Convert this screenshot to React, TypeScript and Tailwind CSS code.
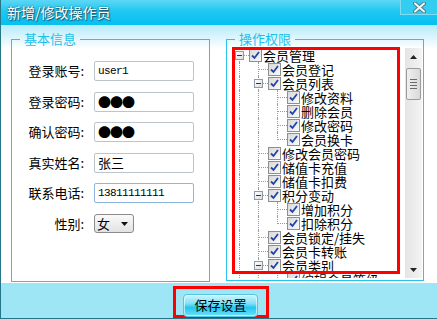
import { type ReactNode } from 'react'

const cjk = "font-['Noto_Sans_CJK_SC',sans-serif]"

interface Row {
  t: string
  l: number
  anc: boolean[]
  box?: boolean
  last?: boolean
  first?: boolean
}

const rows: Row[] = [
  { t: '会员管理', l: 0, anc: [], box: true, first: true },
  { t: '会员登记', l: 1, anc: [true] },
  { t: '会员列表', l: 1, anc: [true], box: true },
  { t: '修改资料', l: 2, anc: [true, true] },
  { t: '删除会员', l: 2, anc: [true, true] },
  { t: '修改密码', l: 2, anc: [true, true] },
  { t: '会员换卡', l: 2, anc: [true, true], last: true },
  { t: '修改会员密码', l: 1, anc: [true] },
  { t: '储值卡充值', l: 1, anc: [true] },
  { t: '储值卡扣费', l: 1, anc: [true] },
  { t: '积分变动', l: 1, anc: [true], box: true },
  { t: '增加积分', l: 2, anc: [true, true] },
  { t: '扣除积分', l: 2, anc: [true, true], last: true },
  { t: '会员锁定/挂失', l: 1, anc: [true] },
  { t: '会员卡转账', l: 1, anc: [true] },
  { t: '会员类别', l: 1, anc: [true], box: true },
  { t: '编辑会员等级', l: 2, anc: [true, true] },
]

function Check() {
  return (
    <div className="w-[13px] h-[13px] shrink-0 border border-[#8e8f8f] bg-[linear-gradient(135deg,#d8d8d8,#fbfbfb)] flex items-center justify-center">
      <svg width="11" height="11" viewBox="0 0 11 11">
        <path d="M2 5.5 L4.5 8 L9 2" fill="none" stroke="#2344a6" strokeWidth="1.8" />
      </svg>
    </div>
  )
}

function TreeRow({ r }: { r: Row }) {
  const own = r.first
    ? 'absolute left-[9px] top-[7px] h-[7px] border-l border-dotted border-[#9a9a9a]'
    : r.last
      ? 'absolute left-[9px] top-0 h-[8px] border-l border-dotted border-[#9a9a9a]'
      : 'absolute left-[9px] top-0 h-[14px] border-l border-dotted border-[#9a9a9a]'
  return (
    <div className="flex h-[14px] items-center">
      {r.anc.map((c, k) => (
        <div key={k} className="relative w-[19px] h-[14px] shrink-0">
          {c ? <div className="absolute left-[9px] top-0 h-[14px] border-l border-dotted border-[#9a9a9a]" /> : null}
        </div>
      ))}
      <div className="relative w-[19px] h-[14px] shrink-0">
        <div className={own} />
        <div className="absolute left-[9px] top-[7px] w-[10px] border-t border-dotted border-[#9a9a9a]" />
        {r.box ? (
          <div className="absolute left-[5px] top-[3px] w-[9px] h-[9px] border border-[#8f9aa6] bg-[linear-gradient(135deg,#ffffff,#dcdcdc)] flex items-center justify-center">
            <div className="w-[5px] h-px bg-[#1e3576]" />
          </div>
        ) : null}
      </div>
      <Check />
      <span className="ml-[1px] text-[13px] leading-[13px] text-black whitespace-nowrap">{r.t}</span>
    </div>
  )
}

function Field({ label, children }: { label: string; children: ReactNode }) {
  return (
    <div className="flex items-center h-[20px]">
      <span className="w-[64px] text-right text-[13px] leading-[16px] text-black whitespace-nowrap">{label}</span>
      <div className="ml-[10px]">{children}</div>
    </div>
  )
}

function Box({ children, blue }: { children: ReactNode; blue?: boolean }) {
  return (
    <div
      className={
        blue
          ? 'w-[100px] h-[20px] rounded-[2px] border border-[#8cb6de] bg-white flex items-center pl-[3px] overflow-hidden'
          : 'w-[100px] h-[20px] rounded-[2px] border border-[#bcc4ce] bg-white flex items-center pl-[3px] overflow-hidden'
      }
    >
      {children}
    </div>
  )
}

const mono = "font-['Liberation_Mono',monospace] text-[11px] tracking-[-0.6px] text-black"

export default function App() {
  return (
    <div className={`w-[437px] h-[319px] flex flex-col border-l border-b border-[#26768a] bg-white ${cjk}`}>
      {/* title bar */}
      <div className="h-[25px] shrink-0 flex bg-[linear-gradient(to_bottom,#5dd7f5,#20c8f1_45%,#04bff0)]">
        <span className="pl-[6px] pt-[4px] text-[14px] leading-[17px] text-white [text-shadow:0_0_2px_#1b5566,1px_1px_1px_#1b5566]">
          新增/修改操作员
        </span>
        <div className="ml-auto w-[37px] h-[15px] border-l border-b border-[#7edcf3] bg-[#34cdf2] flex items-center justify-center">
          <svg width="13" height="11" viewBox="0 0 13 11">
            <path d="M2 1.5 L11 9.5 M11 1.5 L2 9.5" stroke="#4e7d8c" strokeWidth="4" strokeLinecap="round" />
            <path d="M2 1.5 L11 9.5 M11 1.5 L2 9.5" stroke="#eef6f8" strokeWidth="2" strokeLinecap="round" />
          </svg>
        </div>
      </div>

      {/* body */}
      <div className="h-[258px] shrink-0 flex items-start pt-[7px] pl-[10px] gap-[16px] bg-[linear-gradient(to_bottom,#b6ebfa,#ffffff_24px)]">
        <fieldset className="w-[199px] h-[250px] border border-[#27c4ec] px-[8px]">
          <legend className="px-[4px] text-[13px] leading-[14px] text-[#1cbfea]">基本信息</legend>
          <div className="flex flex-col gap-[10.6px] pt-[15px]">
            <Field label="登录账号:">
              <Box><span className={mono}>user1</span></Box>
            </Field>
            <Field label="登录密码:">
              <Box><span className="text-[13px] leading-[14px] tracking-[-1px] text-black">●●●</span></Box>
            </Field>
            <Field label="确认密码:">
              <Box><span className="text-[13px] leading-[14px] tracking-[-1px] text-black">●●●</span></Box>
            </Field>
            <Field label="真实姓名:">
              <Box><span className="text-[13px] leading-[14px] text-black">张三</span></Box>
            </Field>
            <Field label="联系电话:">
              <Box blue><span className={mono}>13811111111</span></Box>
            </Field>
            <Field label="性别:">
              <div className="w-[40px] h-[19px] rounded-[3px] border border-[#8b8b8b] bg-[linear-gradient(to_bottom,#fafafa,#e2e2e2)] flex items-center pl-[2px]">
                <span className="text-[13px] leading-[14px] text-black">女</span>
                <svg className="ml-auto mr-[5px]" width="7" height="4" viewBox="0 0 7 4">
                  <path d="M0 0 H7 L3.5 4 Z" fill="#111" />
                </svg>
              </div>
            </Field>
          </div>
        </fieldset>

        <fieldset className="w-[198px] h-[249px] border border-[#27c4ec] pl-[3px] pr-[1px]">
          <legend className="ml-[5px] px-[4px] text-[13px] leading-[14px] text-[#1cbfea]">操作权限</legend>
          <div className="relative mt-[1px] h-[231px] flex bg-white">
            <div className="flex-1 overflow-hidden pt-[1px]">
              {rows.map((r, i) => (
                <TreeRow key={i} r={r} />
              ))}
            </div>
            {/* scrollbar */}
            <div className="w-[17px] flex flex-col mt-[1px] bg-[linear-gradient(to_right,#e4e4e4,#f4f4f4)]">
              <div className="h-[17px] flex items-center justify-center">
                <svg width="7" height="4" viewBox="0 0 7 4"><path d="M0 4 H7 L3.5 0 Z" fill="#222" /></svg>
              </div>
              <div className="mt-[3px] mx-[1px] h-[32px] rounded-[2px] border border-[#9c9c9c] bg-[linear-gradient(to_right,#f0f0f0,#d9d9d9)] flex flex-col items-center justify-center gap-[2px]">
                <div className="w-[7px] h-px bg-[#6a6a6a]" />
                <div className="w-[7px] h-px bg-[#6a6a6a]" />
                <div className="w-[7px] h-px bg-[#6a6a6a]" />
                <div className="w-[7px] h-px bg-[#6a6a6a]" />
              </div>
              <div className="flex-1" />
              <div className="h-[17px] flex items-center justify-center">
                <svg width="7" height="4" viewBox="0 0 7 4"><path d="M0 0 H7 L3.5 4 Z" fill="#222" /></svg>
              </div>
            </div>
            <div className="absolute left-[2px] top-0 w-[168px] h-[227px] border-[3px] border-[#ff0000]" />
          </div>
        </fieldset>
      </div>

      {/* footer */}
      <div className="h-[35px] shrink-0 flex justify-center pl-[4px] pt-[3px] bg-[#9ee6f6]">
        <div className="h-[32px] border-[3px] border-[#ff0000] pl-[7px] pr-[8px] pt-[2px]">
          <button className="w-[75px] h-[23px] rounded-[4px] border border-[#55c3e4] bg-[linear-gradient(to_bottom,#cdf5fd,#83e1f7_40%,#1fc8f1_60%,#72ddf6)] text-[13px] leading-[14px] text-black shadow-[inset_0_0_0_1px_rgba(255,255,255,0.6)]">
            保存设置
          </button>
        </div>
      </div>
    </div>
  )
}
